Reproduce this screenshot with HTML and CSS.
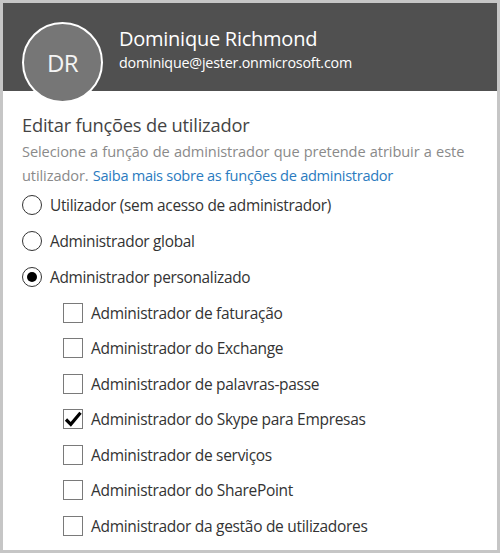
FILE: index.html
```html
<!DOCTYPE html>
<html lang="pt">
<head>
<meta charset="utf-8">
<link rel="stylesheet" href="styles.css">
</head>
<body>
<div class="frame">
  <header class="header">
    <div class="avatar">DR</div>
    <div class="identity">
      <div class="name">Dominique Richmond</div>
      <div class="email">dominique@jester.onmicrosoft.com</div>
    </div>
  </header>
  <main class="content">
    <h1 class="title">Editar funções de utilizador</h1>
    <p class="desc">Selecione a função de administrador que pretende atribuir a este utilizador. <a class="link">Saiba mais sobre as funções de administrador</a></p>
    <ul class="radios">
      <li class="radio-row"><span class="radio"></span>Utilizador (sem acesso de administrador)</li>
      <li class="radio-row"><span class="radio"></span>Administrador global</li>
      <li class="radio-row"><span class="radio checked"></span>Administrador personalizado</li>
    </ul>
    <ul class="checks">
      <li class="check-row"><span class="box"></span>Administrador de faturação</li>
      <li class="check-row"><span class="box"></span>Administrador do Exchange</li>
      <li class="check-row"><span class="box"></span>Administrador de palavras-passe</li>
      <li class="check-row"><span class="box"><svg width="20" height="20" viewBox="0 0 20 20"><path d="M3 10.5 L7.8 15.3 L17.5 3.8" fill="none" stroke="#000" stroke-width="3.2"/></svg></span>Administrador do Skype para Empresas</li>
      <li class="check-row"><span class="box"></span>Administrador de serviços</li>
      <li class="check-row"><span class="box"></span>Administrador do SharePoint</li>
      <li class="check-row"><span class="box"></span>Administrador da gestão de utilizadores</li>
    </ul>
  </main>
</div>
</body>
</html>
```
FILE: styles.css
```css
* { box-sizing: border-box; }
html, body { margin: 0; padding: 0; background: #fff; }
body { font-family: "Open Sans", "Noto Sans", sans-serif; color: #333; }
.frame {
  width: 500px;
  height: 553px;
  border: 3px solid #c6c6c6;
  overflow: hidden;
  background: #fff;
}
.header {
  height: 88px;
  background: #505050;
  display: flex;
  align-items: flex-start;
  padding: 19px 0 0 19px;
  gap: 16px;
}
.avatar {
  flex: none;
  width: 81px;
  height: 81px;
  border-radius: 50%;
  background: #767676;
  border: 2px solid #fff;
  color: #f4f4f4;
  font-size: 24px;
  display: flex;
  align-items: center;
  justify-content: center;
  position: relative;
  z-index: 1;
  letter-spacing: -0.5px;
}
.identity { color: #fff; padding-top: 4px; }
.name { font-size: 20px; line-height: 26px; letter-spacing: -0.25px; }
.email { font-size: 14.3px; line-height: 20px; margin-top: 1px; letter-spacing: -0.2px; }
.content { padding: 22px 0 0 19px; }
.title { margin: 0; font-weight: normal; font-size: 18.3px; line-height: 24px; color: #444; letter-spacing: -0.2px; }
.desc { margin: 2px 0 0; font-size: 14.6px; line-height: 24px; color: #8a8a8a; width: 474px; letter-spacing: -0.1px; word-spacing: 0.6px; }
.link { color: #2b7bc0; letter-spacing: -0.3px; word-spacing: 0; }
.radios, .checks { list-style: none; margin: 0; padding: 0; }
.radios { margin-top: 0; }
.radio-row {
  display: flex; align-items: center; gap: 8px;
  height: 36px; font-size: 15.4px; color: #333; letter-spacing: -0.3px;
}
.radio {
  width: 20px; height: 20px; border-radius: 50%;
  border: 1.5px solid #333; display: flex; align-items: center; justify-content: center;
}
.radio.checked::after { content: ""; width: 10px; height: 10px; border-radius: 50%; background: #000; }
.checks { padding-left: 41px; }
.check-row {
  display: flex; align-items: center; gap: 8px;
  height: 35.5px; font-size: 15.5px; color: #333; letter-spacing: -0.3px;
}
.box { width: 20px; height: 20px; border: 1px solid #7a7a7a; display: flex; }
.box svg { display: block; margin: -1px; }
```
